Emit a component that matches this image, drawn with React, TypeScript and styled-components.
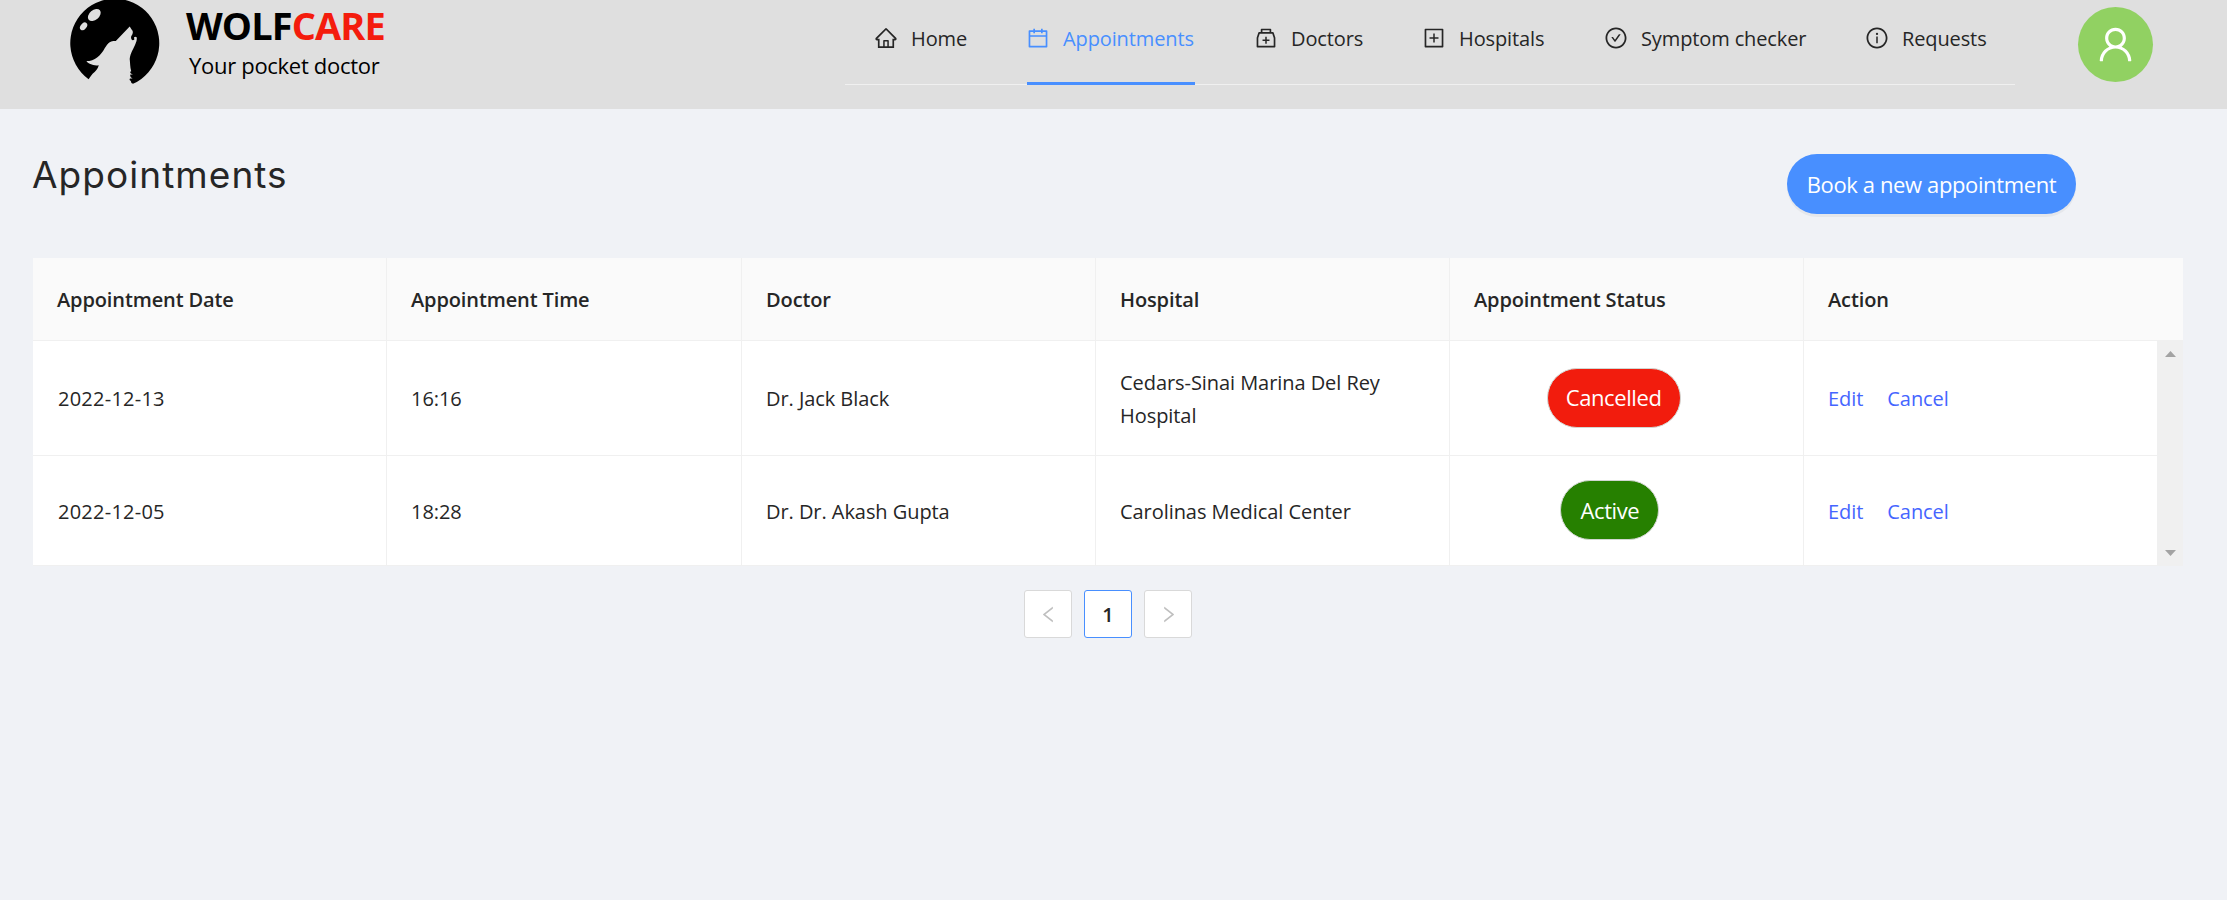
import React from "react";
import styled, { createGlobalStyle } from "styled-components";
import type { IconType } from "react-icons";
import {
  AiOutlineCalendar,
  AiOutlineCheckCircle,
  AiOutlineHome,
  AiOutlineInfoCircle,
  AiOutlineLeft,
  AiOutlineMedicineBox,
  AiOutlinePlusSquare,
  AiOutlineRight,
  AiOutlineUser,
} from "react-icons/ai";

const GlobalStyle = createGlobalStyle`
  *, *::before, *::after { box-sizing: border-box; }
  body {
    margin: 0;
    background: #f0f2f6;
    color: #262626;
    font-family: "Open Sans", "Noto Sans", sans-serif;
    font-size: 20px;
    letter-spacing: -0.08px;
  }
`;

const Page = styled.div`
  min-height: 900px;
  background: #f0f2f6;
`;

const Header = styled.header`
  display: flex;
  align-items: flex-start;
  height: 109px;
  padding-left: 64px;
  background: #dfdfdf;
`;

const Brand = styled.div`
  display: flex;
  flex: none;
  width: 781px;
`;

const LogoMark = styled.svg`
  flex: none;
  width: 100px;
  height: 90px;
  margin-right: 22px;
`;

const BrandText = styled.div`
  color: #000;
`;

const BrandName = styled.div`
  font-size: 38px;
  font-weight: 700;
  line-height: 50px;
  letter-spacing: -0.9px;
`;

const BrandAccent = styled.span`
  color: #f41c0d;
`;

const Tagline = styled.div`
  margin-left: 3px;
  font-size: 22px;
  line-height: 31px;
  letter-spacing: -0.3px;
`;

const Nav = styled.nav`
  display: flex;
  flex: none;
  gap: 60px;
  width: 1170px;
  height: 85px;
  padding-left: 30px;
  box-shadow: inset 0 -1px 0 #f0f0f0;
`;

const NavItem = styled.a<{ $width: number; $active?: boolean }>`
  display: flex;
  align-items: center;
  flex: none;
  width: ${(p) => p.$width}px;
  height: 85px;
  padding-bottom: 6px;
  border-bottom: 3px solid ${(p) => (p.$active ? "#488fff" : "transparent")};
  color: ${(p) => (p.$active ? "#488fff" : "#262626")};
  letter-spacing: -0.12px;
  white-space: nowrap;

  svg {
    flex: none;
    width: 24px;
    height: 24px;
    margin: 0 13.5px 0 -1.5px;
  }
`;

const Avatar = styled.div`
  display: flex;
  align-items: center;
  justify-content: center;
  flex: none;
  width: 75px;
  height: 75px;
  margin: 7px 0 0 63px;
  border-radius: 50%;
  background: #91d162;
  color: #fff;

  svg {
    width: 43px;
    height: 43px;
  }
`;

const Main = styled.main`
  padding: 45px 44px 0 33px;
`;

const TitleBar = styled.div`
  display: flex;
  align-items: flex-start;
  justify-content: space-between;
  height: 104px;
  padding-right: 107px;
`;

const Title = styled.h1`
  margin: 0 0 0 -1px;
  font-family: Inter, "Open Sans", sans-serif;
  font-size: 37px;
  font-weight: 400;
  line-height: 42px;
  letter-spacing: 1.05px;
`;

const BookButton = styled.button`
  width: 289px;
  height: 60px;
  padding: 0;
  border: 0;
  border-radius: 30px;
  background: #488fff;
  box-shadow: 0 3px 0 rgba(0, 0, 0, 0.045);
  color: #fff;
  font: 400 22px "Open Sans", sans-serif;
  letter-spacing: -0.38px;
`;

const Table = styled.div`
  width: 2150px;
`;

const Row = styled.div<{ $height: number; $line?: boolean }>`
  display: grid;
  grid-template-columns: 354px 355px 354px 354px 354px 353px;
  height: ${(p) => p.$height}px;
  background: #fff;
  letter-spacing: -0.06px;
  border-bottom: ${(p) => (p.$line ? "1px solid #f0f0f0" : "0")};
`;

const HeadRow = styled(Row)`
  background: #fafafa;
  font-weight: 600;
  letter-spacing: -0.12px;
`;

const Cell = styled.div`
  display: flex;
  align-items: center;
  padding: 0 24px;
  border-right: 1px solid #f0f0f0;
  line-height: 33px;

  &:last-child {
    border-right: 0;
  }
`;

const BodyCell = styled(Cell)`
  padding-top: 1px;
`;

const DateCell = styled(BodyCell)`
  padding-left: 25px;
  letter-spacing: 0.24px;
`;

const Body = styled.div`
  display: flex;
`;

const Rows = styled.div`
  width: 2124px;
  border-top: 1px solid #f0f0f0;
  border-bottom: 1px solid #f0f0f0;
`;

const Scrollbar = styled.div`
  display: flex;
  flex-direction: column;
  align-items: center;
  justify-content: space-between;
  width: 26px;
  padding: 11px 0 10px 1px;
  background: #f0f0f0;

  svg {
    display: block;
    width: 11px;
    height: 6px;
    fill: #a3a3a3;
  }
`;

const StatusBadge = styled.span<{ $cancelled: boolean }>`
  display: flex;
  align-items: center;
  justify-content: center;
  flex: none;
  width: ${(p) => (p.$cancelled ? 134 : 99)}px;
  height: 60px;
  margin: 0 0 2px ${(p) => (p.$cancelled ? 72.6 : 86.4)}px;
  border: 1px solid #d2d6d2;
  border-radius: 30px;
  background: ${(p) => (p.$cancelled ? "#f21c0d" : "#268000")};
  color: #fff;
  font-size: 22px;
  letter-spacing: -0.4px;
`;

const ActionLink = styled.a`
  margin-right: 24px;
  color: #4565ff;
`;

const Pagination = styled.div`
  display: flex;
  justify-content: center;
  gap: 12px;
  margin-top: 24px;
`;

const PageButton = styled.button<{ $current?: boolean }>`
  display: flex;
  align-items: center;
  justify-content: center;
  width: 48px;
  height: 48px;
  padding: 0;
  border: 1px solid ${(p) => (p.$current ? "#488fff" : "#d9d9d9")};
  border-radius: 3px;
  background: #fff;
  color: ${(p) => (p.$current ? "#262626" : "#bfbfbf")};
  font: 600 20px "Open Sans", sans-serif;

  svg {
    width: 21px;
    height: 21px;
  }
`;

const navItems: { label: string; icon: IconType; width: number; active?: boolean }[] = [
  { label: "Home", icon: AiOutlineHome, width: 92 },
  { label: "Appointments", icon: AiOutlineCalendar, width: 168, active: true },
  { label: "Doctors", icon: AiOutlineMedicineBox, width: 108 },
  { label: "Hospitals", icon: AiOutlinePlusSquare, width: 122 },
  { label: "Symptom checker", icon: AiOutlineCheckCircle, width: 201 },
  { label: "Requests", icon: AiOutlineInfoCircle, width: 119 },
];

const columns = [
  "Appointment Date",
  "Appointment Time",
  "Doctor",
  "Hospital",
  "Appointment Status",
  "Action",
];

const appointments = [
  {
    date: "2022-12-13",
    time: "16:16",
    doctor: "Dr. Jack Black",
    hospital: "Cedars-Sinai Marina Del Rey Hospital",
    status: "Cancelled",
    height: 115,
  },
  {
    date: "2022-12-05",
    time: "18:28",
    doctor: "Dr. Dr. Akash Gupta",
    hospital: "Carolinas Medical Center",
    status: "Active",
    height: 109,
  },
];

function WolfLogo() {
  return (
    <LogoMark viewBox="0 0 100 90" aria-label="Wolfcare">
      <path d="M24.6 79.2A44.5 44.5 0 1 1 69 83.8Q67 83.5 66.8 81Q64.8 80 66 78.5L68.6 78.6Q65.5 77 66.4 74.6L69 74.6Q65.8 73.5 66.2 71.8L67.2 71.2C66 67 66.2 63 65.7 59C66.2 53 70 48 71.6 43.4Q73.2 40 72.7 37.3Q71 36.2 70 37.5L70.4 39.6Q68.5 41 67.6 39.5C66.6 37.5 67 36.5 68.4 34.2Q69.6 31.2 67.6 29.4L65.7 26.6L51.8 41C48 41 46 41.6 44.4 43.2C40.5 47 39.6 52.5 33.4 57.2C30 60 26.5 61 22.4 61.1Q24.5 64.2 29.2 65Q31.5 65.8 34.8 65.3Q33.5 70 28.6 73.8Q26.5 76.5 24.6 79.2Z" />
      <ellipse cx="30.3" cy="15" rx="7.3" ry="4.9" fill="#dfdfdf" transform="rotate(-40 30.3 15)" />
      <ellipse cx="19.6" cy="26.3" rx="4.4" ry="2.9" fill="#dfdfdf" transform="rotate(-50 19.6 26.3)" />
    </LogoMark>
  );
}

export default function App() {
  return (
    <Page>
      <GlobalStyle />
      <Header>
        <Brand>
          <WolfLogo />
          <BrandText>
            <BrandName>
              WOLF<BrandAccent>CARE</BrandAccent>
            </BrandName>
            <Tagline>Your pocket doctor</Tagline>
          </BrandText>
        </Brand>
        <Nav>
          {navItems.map(({ label, icon: Icon, width, active }) => (
            <NavItem key={label} $width={width} $active={active}>
              <Icon />
              {label}
            </NavItem>
          ))}
        </Nav>
        <Avatar>
          <AiOutlineUser />
        </Avatar>
      </Header>
      <Main>
        <TitleBar>
          <Title>Appointments</Title>
          <BookButton>Book a new appointment</BookButton>
        </TitleBar>
        <Table>
          <HeadRow $height={82}>
            {columns.map((name) => (
              <Cell key={name}>{name}</Cell>
            ))}
          </HeadRow>
          <Body>
            <Rows>
              {appointments.map((a, i) => (
                <Row key={a.date} $height={a.height} $line={i < appointments.length - 1}>
                  <DateCell>{a.date}</DateCell>
                  <BodyCell>{a.time}</BodyCell>
                  <BodyCell>{a.doctor}</BodyCell>
                  <BodyCell>{a.hospital}</BodyCell>
                  <BodyCell>
                    <StatusBadge $cancelled={a.status === "Cancelled"}>{a.status}</StatusBadge>
                  </BodyCell>
                  <BodyCell>
                    <ActionLink>Edit</ActionLink>
                    <ActionLink>Cancel</ActionLink>
                  </BodyCell>
                </Row>
              ))}
            </Rows>
            <Scrollbar>
              <svg viewBox="0 0 11 6">
                <path d="M0 6L5.5 0L11 6Z" />
              </svg>
              <svg viewBox="0 0 11 6">
                <path d="M0 0H11L5.5 6Z" />
              </svg>
            </Scrollbar>
          </Body>
        </Table>
        <Pagination>
          <PageButton>
            <AiOutlineLeft />
          </PageButton>
          <PageButton $current>1</PageButton>
          <PageButton>
            <AiOutlineRight />
          </PageButton>
        </Pagination>
      </Main>
    </Page>
  );
}
